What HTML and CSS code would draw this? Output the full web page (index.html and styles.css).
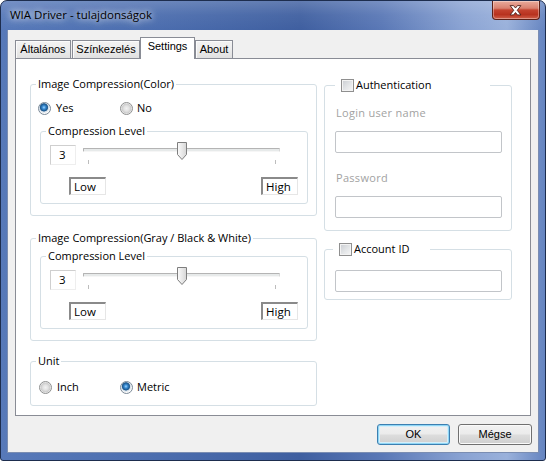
FILE: index.html
```html
<!DOCTYPE html>
<html>
<head>
<meta charset="utf-8">
<link rel="stylesheet" href="styles.css">
</head>
<body>
<div class="window">
  <div class="titlebar">
    <span class="title">WIA Driver - tulajdonságok</span>
    <div class="close">
      <svg width="48" height="19" viewBox="0 0 48 19"><path d="M18.5 4.5 L22 4.5 L24 7 L26 4.5 L29.5 4.5 L25.8 9.3 L29.5 14 L26 14 L24 11.6 L22 14 L18.5 14 L22.2 9.3 Z" fill="#fff" stroke="#4a1a14" stroke-width="0.9" stroke-linejoin="round"/></svg>
    </div>
  </div>
  <div class="client">
    <div class="tabs">
      <div class="tab t1">Általános</div>
      <div class="tab t2">Színkezelés</div>
      <div class="tab t3 active">Settings</div>
      <div class="tab t4">About</div>
    </div>
    <div class="panel">
      <div class="col-left">
        <fieldset class="group g1">
          <legend>Image Compression(Color)</legend>
          <div class="radios">
            <label class="radio-item"><span class="radio checked"></span>Yes</label>
            <label class="radio-item no"><span class="radio"></span>No</label>
          </div>
          <fieldset class="group inner">
            <legend>Compression Level</legend>
            <div class="slider-row">
              <div class="num">3</div>
              <div class="slider">
                <div class="track"></div>
                <div class="ticks"><span class="tick"></span><span class="tick"></span></div>
                <svg class="thumb" width="10" height="18" viewBox="0 0 10 18"><defs><linearGradient id="tg1" x1="0" x2="1" y1="0" y2="0"><stop offset="0" stop-color="#fbfbfb"/><stop offset="1" stop-color="#d6d6d6"/></linearGradient></defs><path d="M0.5 0.5 H9.5 V12.5 L5 17.5 L0.5 12.5 Z" fill="url(#tg1)" stroke="#7e7e7e"/></svg>
              </div>
            </div>
            <div class="levels"><div class="level">Low</div><div class="level">High</div></div>
          </fieldset>
        </fieldset>

        <fieldset class="group g2">
          <legend>Image Compression(Gray / Black &amp; White)</legend>
          <fieldset class="group inner">
            <legend>Compression Level</legend>
            <div class="slider-row">
              <div class="num">3</div>
              <div class="slider">
                <div class="track"></div>
                <div class="ticks"><span class="tick"></span><span class="tick"></span></div>
                <svg class="thumb" width="10" height="18" viewBox="0 0 10 18"><defs><linearGradient id="tg2" x1="0" x2="1" y1="0" y2="0"><stop offset="0" stop-color="#fbfbfb"/><stop offset="1" stop-color="#d6d6d6"/></linearGradient></defs><path d="M0.5 0.5 H9.5 V12.5 L5 17.5 L0.5 12.5 Z" fill="url(#tg2)" stroke="#7e7e7e"/></svg>
              </div>
            </div>
            <div class="levels"><div class="level">Low</div><div class="level">High</div></div>
          </fieldset>
        </fieldset>

        <fieldset class="group g3">
          <legend>Unit</legend>
          <div class="radios">
            <label class="radio-item"><span class="radio"></span>Inch</label>
            <label class="radio-item no"><span class="radio checked"></span>Metric</label>
          </div>
        </fieldset>
      </div>

      <div class="col-right">
        <fieldset class="group auth">
          <legend class="check-legend l-auth"><span class="check-wrap"><span class="checkbox"></span>Authentication</span></legend>
          <div class="field-label first">Login user name</div>
          <div class="textbox"></div>
          <div class="field-label second">Password</div>
          <div class="textbox"></div>
        </fieldset>
        <fieldset class="group account">
          <legend class="check-legend l-acc"><span class="check-wrap"><span class="checkbox"></span>Account ID</span></legend>
          <div class="textbox acc-box"></div>
        </fieldset>
      </div>
    </div>
    <div class="footer">
      <div class="btn default">OK</div>
      <div class="btn">Mégse</div>
    </div>
  </div>
</div>
</body>
</html>
```

FILE: styles.css
```css
html, body {
  margin: 0;
  padding: 0;
}
body {
  width: 546px;
  height: 461px;
  overflow: hidden;
  background: #ffffff;
  font-family: "Open Sans", "Noto Sans", sans-serif;
  font-size: 11px;
  color: #000;
}
.window {
  width: 546px;
  height: 461px;
  box-sizing: border-box;
  border: 1px solid #1d2d4e;
  border-radius: 7px 7px 3px 3px;
  padding: 0 6px 7px 6px;
  display: flex;
  flex-direction: column;
  background:
    linear-gradient(180deg, rgba(255,255,255,0.18) 0, rgba(255,255,255,0.05) 14px, rgba(0,0,0,0) 29px),
    linear-gradient(90deg, #5779b9 0%, #4d6fb0 25%, #3f5fa0 55%, #5a78b6 70%, #8aa3d3 85%, #9ab1db 93%, #6584c0 100%);
}
.titlebar {
  height: 29px;
  margin: 0 -6px;
  display: flex;
  justify-content: space-between;
  align-items: flex-start;
}
.title {
  padding: 6px 0 0 9px;
  line-height: 16px;
  font-size: 11.5px;
  color: #000;
  text-shadow: 0 0 6px rgba(255,255,255,0.9), 0 0 10px rgba(255,255,255,0.7);
}
.close {
  width: 48px;
  height: 19px;
  margin-right: 5px;
  box-sizing: border-box;
  border: 1px solid #5c2118;
  border-top: none;
  border-radius: 0 0 4px 4px;
  background: linear-gradient(180deg, #e9ab9c 0%, #d98170 40%, #c4432f 50%, #b8321f 75%, #d0604a 100%);
  box-shadow: inset 0 0 0 1px rgba(255,255,255,0.35);
  display: flex;
}
.close svg {
  display: block;
  margin-left: -1px;
}
.client {
  height: 423px;
  box-sizing: border-box;
  border: 1px solid #7a8db2;
  border-top: none;
  background: #f0f0f0;
  display: flex;
  flex-direction: column;
}
.tabs {
  height: 28px;
  padding-left: 7px;
  display: flex;
  align-items: flex-end;
  font-family: "Liberation Sans", Arial, sans-serif;
  font-size: 11px;
}
.tab {
  height: 18px;
  box-sizing: border-box;
  border: 1px solid #898c95;
  border-bottom: none;
  background: linear-gradient(180deg, #f3f3f3 0%, #ececec 50%, #e0e0e0 100%);
  box-shadow: inset 1px 1px 0 #fbfbfb;
  text-align: center;
  line-height: 16px;
  color: #000;
}
.t1 { width: 56px; margin-right: 1px; }
.t2 { width: 68px; }
.t3 { width: 55px; }
.t4 { width: 38px; }
.tab.active {
  height: 22px;
  margin-bottom: -1px;
  background: #ffffff;
  box-shadow: none;
  position: relative;
  z-index: 1;
  line-height: 16px;
}
.panel {
  margin-left: 7px;
  width: 516px;
  height: 358px;
  box-sizing: border-box;
  border: 1px solid #898c95;
  background: #ffffff;
  padding: 17px 0 0 14px;
  display: flex;
  align-items: flex-start;
  gap: 7px;
}
.col-left {
  width: 287px;
  display: flex;
  flex-direction: column;
}
.col-right {
  width: 188px;
  display: flex;
  flex-direction: column;
}
fieldset.group {
  margin: 0;
  padding: 0;
  min-width: 0;
  border: 1px solid #d5dfe5;
  border-radius: 3px;
}
fieldset.group > legend {
  padding: 0 2px;
  margin-left: 5px;
  height: 16px;
  line-height: 16px;
  color: #000;
}
fieldset.group.g1 { padding-bottom: 11px; }
fieldset.group.g2 { margin-top: 14px; padding-bottom: 11px; }
fieldset.group.g3 { margin-top: 12px; padding-bottom: 10px; }
.radios {
  display: flex;
  margin-top: 8px;
  padding-left: 7px;
  line-height: 16px;
}
.g3 .radios {
  margin-top: 10px;
  padding-left: 8px;
}
.radio-item {
  display: flex;
  align-items: center;
  gap: 5px;
  width: 82px;
  height: 16px;
}
.radio-item.no {
  gap: 4px;
}
.g3 .radio-item.no {
  margin-left: -1px;
}
.radio {
  width: 13px;
  height: 13px;
  box-sizing: border-box;
  border-radius: 50%;
  border: 1px solid #8e8f8f;
  background: radial-gradient(circle at 50% 50%, #f2f2f2 0, #e3e3e3 2.5px, #cdcdcd 4.5px, #e9e9e9 5.2px, #fafafa 6px);
  flex: none;
}
.radio.checked {
  border-color: #7b8a98;
  background: radial-gradient(circle at 45% 40%, #9fd8ff 0, #3d8fd6 1.6px, #1b5a92 3.4px, #3f6f9a 3.9px, #cfdbe6 4.4px, #fbfbfb 6px);
}
fieldset.group.inner {
  margin: 7px 8px 0 9px;
}
.g2 fieldset.group.inner {
  margin-top: 2px;
}
.slider-row {
  display: flex;
  margin-top: 3px;
  padding-left: 9px;
  height: 23px;
}
.num {
  width: 26px;
  height: 20px;
  margin-top: 3px;
  box-sizing: border-box;
  border: 1px solid;
  border-color: #cfcfcf #eeeeee #eeeeee #cfcfcf;
  background: #ffffff;
  padding-left: 8px;
  line-height: 18px;
  font-size: 11.5px;
}
.slider {
  margin-left: 4px;
  width: 203px;
  height: 23px;
  position: relative;
}
.track {
  margin: 6px 3px 0 3px;
  height: 4px;
  box-sizing: border-box;
  border: 1px solid;
  border-color: #b4b4b4 #d8d8d8 #f6f6f6 #b4b4b4;
  background: #e7eaea;
  border-radius: 1px;
}
.ticks {
  margin-top: 8px;
  height: 5px;
  padding: 0 7px 0 8px;
  display: flex;
  justify-content: space-between;
}
.tick {
  width: 1px;
  height: 4px;
  background: #bdbdbd;
}
.thumb {
  position: absolute;
  top: 0;
  left: 97px;
  display: block;
}
.levels {
  display: flex;
  justify-content: space-between;
  margin-top: 12px;
  padding: 0 9px 8px 28px;
}
.level {
  width: 37px;
  height: 18px;
  box-sizing: border-box;
  border-style: solid;
  border-width: 2px 1px 1px 2px;
  border-color: #8a8a8a #e6e6e6 #e6e6e6 #8a8a8a;
  background: #ffffff;
  padding-left: 3px;
  line-height: 15px;
  font-size: 11.5px;
}
fieldset.group.auth {
  padding: 0 9px 12px 10px;
}
fieldset.group.account {
  margin-top: 9px;
  padding: 0 9px 7px 10px;
}
fieldset.group > legend.check-legend {
  height: 18px;
  line-height: 18px;
  box-sizing: border-box;
  padding: 0 0 0 6px;
}
fieldset.group > legend.l-auth {
  margin-left: 0;
  width: 155px;
}
fieldset.group > legend.l-acc {
  margin-left: -2px;
  width: 97px;
}
.check-wrap {
  display: flex;
  align-items: center;
  gap: 2px;
  height: 18px;
}
.checkbox {
  width: 13px;
  height: 13px;
  box-sizing: border-box;
  border: 1px solid #8f8f8f;
  background: linear-gradient(135deg, #c9ccd1 0%, #e4e6e8 55%, #f6f6f6 100%);
  box-shadow: inset 0 0 0 1px #f3f3f3;
  flex: none;
}
.field-label {
  line-height: 16px;
  color: #a2a2a2;
  padding-left: 1px;
  letter-spacing: 0.3px;
}
.field-label.first { margin-top: 11px; }
.field-label.second { margin-top: 17px; }
.textbox {
  margin-top: 10px;
  width: 167px;
  height: 22px;
  box-sizing: border-box;
  border: 1px solid #c2c5c9;
  border-radius: 2px;
  background: #ffffff;
}
.textbox.acc-box {
  margin-top: 12px;
}
.footer {
  display: flex;
  justify-content: flex-end;
  gap: 8px;
  padding: 8px 6px 0 0;
}
.btn {
  width: 73px;
  height: 21px;
  box-sizing: border-box;
  border: 1px solid #707070;
  border-radius: 3px;
  background: linear-gradient(180deg, #f2f2f2 0%, #ebebeb 48%, #dddddd 52%, #cfcfcf 100%);
  box-shadow: inset 0 0 0 1px #fafafa;
  text-align: center;
  line-height: 19px;
  font-family: "Liberation Sans", Arial, sans-serif;
  font-size: 11px;
  color: #000;
}
.btn + .btn {
  width: 74px;
}
.btn.default {
  border-color: #3c7fb1;
  box-shadow: inset 0 0 0 1px #8fd6f5, inset 0 0 0 2px #d5eefa;
}
```
